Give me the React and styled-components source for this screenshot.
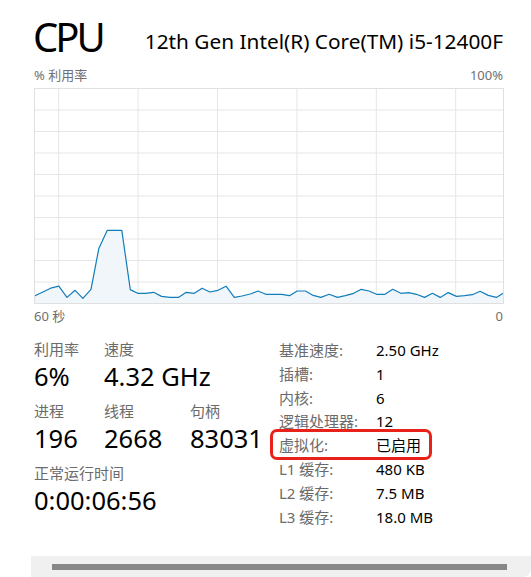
import React from 'react';
import styled, { createGlobalStyle } from 'styled-components';

const GlobalStyle = createGlobalStyle`
  html, body {
    margin: 0;
    padding: 0;
    background: #ffffff;
  }
  body {
    font-family: "Noto Sans", "Noto Sans CJK SC", sans-serif;
    color: #000000;
  }
`;

// pontos do grafico (x, y) em coordenadas locais do quadro 469x215
const cpuPoints = [
  [0, 207.5], [16.2, 199.7], [24.3, 197.7], [32.5, 208.9], [40.6, 201.8],
  [48.4, 209.9], [56.5, 200.8], [64.3, 160.1], [72.8, 141.8], [87.3, 141.8],
  [95.8, 201.1], [103.2, 204.8], [111, 204.8], [119.2, 203.8], [127, 207.9],
  [135.4, 208.9], [143.9, 208.9], [151.7, 203.8], [159.8, 204.8], [167.6, 199.7],
  [175.4, 203.5], [183.5, 201.8], [191.6, 197.7], [199.8, 208.9], [207.5, 207.5],
  [215.7, 205.5], [223.5, 202.5], [231.3, 205.8], [239.7, 205.8], [247.2, 205.8],
  [255, 207.2], [262.7, 202.5], [270.9, 202.5], [278.7, 206.9], [286.4, 208.9],
  [294.6, 205.8], [303, 208.9], [310.8, 207.2], [318.3, 205.2], [326.7, 200.8],
  [334.5, 202.5], [342, 205.8], [350.5, 205.8], [358.2, 200.8], [366.4, 204.8],
  [374.2, 204.1], [381.9, 205.8], [390.1, 208.9], [397.9, 204.8], [405.7, 208.9],
  [413.8, 204.1], [421.9, 207.9], [430, 207.2], [437.8, 206.2], [445.6, 202.8],
  [453.7, 206.9], [461.9, 208.9], [469, 204.5],
];

const CHART_W = 469;
const CHART_H = 215;
const gridX = [24.2, 103.6, 183, 262.4, 341.8, 421.2];

const details = [
  { label: '基准速度:', value: '2.50 GHz' },
  { label: '插槽:', value: '1' },
  { label: '内核:', value: '6' },
  { label: '逻辑处理器:', value: '12' },
  { label: '虚拟化:', value: '已启用', highlight: true },
  { label: 'L1 缓存:', value: '480 KB' },
  { label: 'L2 缓存:', value: '7.5 MB' },
  { label: 'L3 缓存:', value: '18.0 MB' },
];

const Page = styled.div`
  width: 531px;
  height: 577px;
  display: flex;
  flex-direction: column;
  overflow: hidden;
`;

const Content = styled.div`
  flex: 1;
  padding: 17px 28px 0 34px;
`;

const Header = styled.div`
  display: flex;
  justify-content: space-between;
  align-items: flex-start;
`;

const Title = styled.h1`
  margin: 0 0 0 -1px;
  font-size: 40px;
  line-height: 40px;
  font-weight: 400;
  letter-spacing: -3px;
`;

const Model = styled.div`
  margin-top: 12px;
  font-size: 20.8px;
  line-height: 24px;
`;

const AxisRow = styled.div`
  display: flex;
  justify-content: space-between;
  font-size: 13px;
  line-height: 17px;
  color: #707070;
  margin: ${props => props.$top ? '10px 0 4px' : '4px 0 0'};
`;

const Chart = styled.svg`
  display: block;
  width: 470px;
  height: 216px;
`;

const Bottom = styled.div`
  display: flex;
  margin-top: 14px;
`;

const Stats = styled.div`
  display: flex;
  flex-direction: column;
  width: 245px;
  flex-shrink: 0;
`;

const StatRow = styled.div`
  display: flex;
  margin-bottom: 10px;
`;

const Stat = styled.div`
  width: ${props => props.$w}px;
  white-space: nowrap;
`;

const StatLabel = styled.div`
  font-size: 15px;
  line-height: 20px;
  color: #6b6b6b;
`;

const StatValue = styled.div`
  margin-top: 2px;
  font-size: 25.5px;
  line-height: 30px;
`;

const Details = styled.div`
  display: flex;
  flex-direction: column;
  flex: 1;
`;

const DetailRow = styled.div`
  position: relative;
  display: flex;
  font-size: 15px;
  line-height: 23.8px;
  white-space: nowrap;

  ${props => props.$highlight && `
    &::after {
      content: '';
      position: absolute;
      left: -9px;
      top: -5px;
      width: 162px;
      height: 31px;
      box-sizing: border-box;
      border: 3px solid #e8221b;
      border-radius: 7px;
    }
  `}
`;

const DetailLabel = styled.span`
  flex: 0 0 97px;
  color: #6b6b6b;
`;

const DetailValue = styled.span`
  color: #000000;
`;

const ScrollTrack = styled.div`
  margin-left: 31px;
  height: 21px;
  background: #f0f0f0;
  border-bottom-right-radius: 8px;
  padding: 8px 24px 0 21px;
  box-sizing: border-box;
`;

const ScrollThumb = styled.div`
  height: 6px;
  background: #878787;
`;

const CpuChart = () => {
  const line = cpuPoints.map(([x, y]) => `${x + 0.5},${y + 0.5}`).join(' ');
  const area = `0.5,${CHART_H + 0.5} ${line} ${CHART_W + 0.5},${CHART_H + 0.5}`;
  const rows = Array.from({ length: 9 }, (_, i) => (i + 1) * (CHART_H / 10));

  return (
    <Chart viewBox="0 0 470 216">
      {rows.map(y => (
        <line key={y} x1="0" x2={CHART_W} y1={y + 0.5} y2={y + 0.5} stroke="#e6e6e6" strokeWidth="1" />
      ))}
      {gridX.map(x => (
        <line key={x} x1={x + 0.5} x2={x + 0.5} y1="0" y2={CHART_H} stroke="#e6e6e6" strokeWidth="1" />
      ))}
      <polygon points={area} fill="#f1f6fa" />
      <polyline points={line} fill="none" stroke="#117dbb" strokeWidth="1.2" strokeLinejoin="round" />
      <rect x="0.5" y="0.5" width={CHART_W} height={CHART_H} fill="none" stroke="#e0e0e0" strokeWidth="1" />
    </Chart>
  );
};

export default function App() {
  return (
    <>
      <GlobalStyle />
      <Page>
        <Content>
          <Header>
            <Title>CPU</Title>
            <Model>12th Gen Intel(R) Core(TM) i5-12400F</Model>
          </Header>

          <AxisRow $top>
            <span>% 利用率</span>
            <span>100%</span>
          </AxisRow>
          <CpuChart />
          <AxisRow>
            <span>60 秒</span>
            <span>0</span>
          </AxisRow>

          <Bottom>
            <Stats>
              <StatRow>
                <Stat $w={70}>
                  <StatLabel>利用率</StatLabel>
                  <StatValue>6%</StatValue>
                </Stat>
                <Stat $w={120}>
                  <StatLabel>速度</StatLabel>
                  <StatValue>4.32 GHz</StatValue>
                </Stat>
              </StatRow>
              <StatRow>
                <Stat $w={70}>
                  <StatLabel>进程</StatLabel>
                  <StatValue>196</StatValue>
                </Stat>
                <Stat $w={86}>
                  <StatLabel>线程</StatLabel>
                  <StatValue>2668</StatValue>
                </Stat>
                <Stat $w={80}>
                  <StatLabel>句柄</StatLabel>
                  <StatValue>83031</StatValue>
                </Stat>
              </StatRow>
              <StatRow>
                <Stat $w={200}>
                  <StatLabel>正常运行时间</StatLabel>
                  <StatValue>0:00:06:56</StatValue>
                </Stat>
              </StatRow>
            </Stats>

            <Details>
              {details.map(d => (
                <DetailRow key={d.label} $highlight={d.highlight}>
                  <DetailLabel>{d.label}</DetailLabel>
                  <DetailValue>{d.value}</DetailValue>
                </DetailRow>
              ))}
            </Details>
          </Bottom>
        </Content>

        <ScrollTrack>
          <ScrollThumb />
        </ScrollTrack>
      </Page>
    </>
  );
}
